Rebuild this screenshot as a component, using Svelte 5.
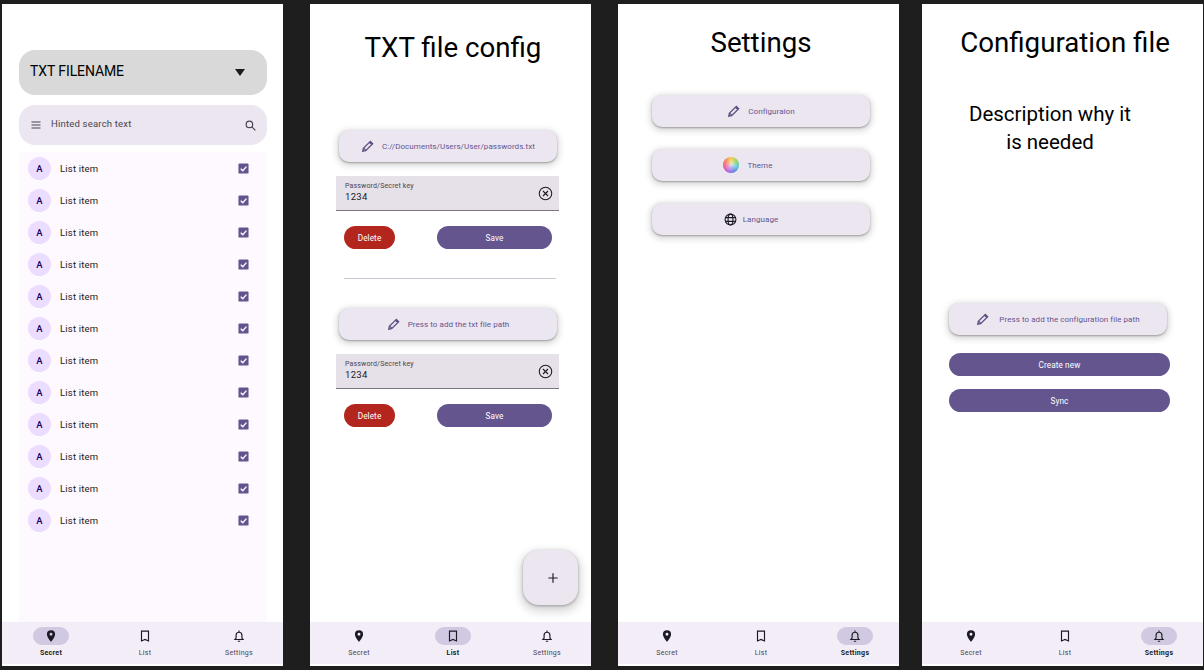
<script>
	const items = Array(12).fill('List item');
	const navItems = ['Secret', 'List', 'Settings'];
</script>

{#snippet pencil()}
	<svg class="pencil" viewBox="0 0 24 24" width="14" height="14"><path d="M3 21l1-5L16 4l4 4L8 20zM14.5 5.5l4 4M5 16l3 3" fill="none" stroke="#5d4f82" stroke-width="2.200"/></svg>
{/snippet}

{#snippet nav(active)}
	<nav class="nav">
		{#each navItems as label, i}
			<div class="nav-item" class:active={i === active}>
				<div class="nav-icon">
					{#if i === 0}
						<svg viewBox="0 0 24 24" width="14" height="14"><path fill-rule="evenodd" d="M12 2a7 7 0 0 0-7 7c0 5 7 13 7 13s7-8 7-13a7 7 0 0 0-7-7zm0 4.5a2.500 2.500 0 1 1 0 5 2.500 2.500 0 0 1 0-5z" fill="#1d1a24"/></svg>
					{:else if i === 1}
						<svg viewBox="0 0 24 24" width="14" height="14"><path d="M6 3.500h12v17l-6-2.600-6 2.600z" fill="none" stroke="#1d1a24" stroke-width="2"/></svg>
					{:else}
						<svg viewBox="0 0 24 24" width="14" height="14"><path d="M5 18h14l-2-2.500V10.500a5 5 0 0 0-10 0v5zM12 2.500v3M10 21h4" fill="none" stroke="#1d1a24" stroke-width="2"/></svg>
					{/if}
				</div>
				<span>{label}</span>
			</div>
		{/each}
	</nav>
{/snippet}

{#snippet keyBlock(path)}
	<button class="tonal wide">
		{@render pencil()}
		<span>{path}</span>
	</button>
	<div class="field">
		<div class="field-text">
			<small>Password/Secret key</small>
			<span>1234</span>
		</div>
		<svg viewBox="0 0 24 24" width="15" height="15"><circle cx="12" cy="12" r="10" fill="none" stroke="#1d1a24" stroke-width="1.700"/><path d="M8 8l8 8M16 8l-8 8" stroke="#1d1a24" stroke-width="1.700"/></svg>
	</div>
	<div class="actions">
		<button class="pill danger">Delete</button>
		<button class="pill save">Save</button>
	</div>
{/snippet}

<div class="board">
	<section class="phone">
		<div class="content first">
			<div class="select">
				<span>TXT FILENAME</span>
				<i class="caret"></i>
			</div>
			<div class="search">
				<svg viewBox="0 0 24 24" width="12" height="12"><path d="M3 6h18M3 12h18M3 18h18" stroke="#49454f" stroke-width="2.200"/></svg>
				<span>Hinted search text</span>
				<svg viewBox="0 0 24 24" width="13" height="13"><circle cx="10" cy="10" r="6" fill="none" stroke="#49454f" stroke-width="2.200"/><path d="M14.500 14.500L21 21" stroke="#49454f" stroke-width="2.200"/></svg>
			</div>
			<ul class="list">
				{#each items as item}
					<li>
						<div class="avatar">A</div>
						<span>{item}</span>
						<svg viewBox="0 0 12 12" width="11" height="11"><rect width="11" height="11" x="0.500" y="0.500" rx="1" fill="#65558f"/><path d="M3 6.200l2.200 2.200L9.200 4" fill="none" stroke="#fff" stroke-width="1.400"/></svg>
					</li>
				{/each}
			</ul>
		</div>
		{@render nav(0)}
	</section>

	<section class="phone">
		<div class="content config">
			<h1 class="txt-title">TXT file config</h1>
			{@render keyBlock('C://Documents/Users/User/passwords.txt')}
			<hr />
			{@render keyBlock('Press to add the txt file path')}
			<button class="fab">
				<svg viewBox="0 0 24 24" width="14" height="14"><path d="M12 4v16M4 12h16" stroke="#1d1a24" stroke-width="2"/></svg>
			</button>
		</div>
		{@render nav(1)}
	</section>

	<section class="phone">
		<div class="content settings">
			<h1>Settings</h1>
			<button class="tonal menu">
				{@render pencil()}
				<span>Configuraion</span>
			</button>
			<button class="tonal menu theme">
				<span class="wheel"></span>
				<span>Theme</span>
			</button>
			<button class="tonal menu language">
				<svg viewBox="0 0 24 24" width="13" height="13"><g fill="none" stroke="#1d1a24" stroke-width="2"><circle cx="12" cy="12" r="10"/><ellipse cx="12" cy="12" rx="4.500" ry="10"/><path d="M2.500 8.500h19M2.500 15.500h19"/></g></svg>
				<span>Language</span>
			</button>
		</div>
		{@render nav(2)}
	</section>

	<section class="phone last">
		<div class="content file">
			<h1>Configuration file</h1>
			<p>Description why it<br />is needed</p>
			<button class="tonal file-btn">
				{@render pencil()}
				<span>Press to add the configuration file path</span>
			</button>
			<button class="pill wide-pill">Create new</button>
			<button class="pill wide-pill">Sync</button>
		</div>
		{@render nav(2)}
	</section>
</div>

<style>
	:global(body) {
		margin: 0;
		background: #1e1e1e;
		overflow: hidden;
	}

	.board {
		display: flex;
		gap: 27px;
		width: 1204px;
		height: 670px;
		padding: 4px 0 4px 2px;
		box-sizing: border-box;
		overflow: hidden;
		font-family: Roboto, sans-serif;
	}

	.phone {
		flex: 0 0 281px;
		height: 662px;
		background: #fff;
		display: flex;
		flex-direction: column;
	}

	.phone.last {
		margin-left: -4px;
	}

	.content {
		flex: 1;
		min-height: 0;
		position: relative;
		display: flex;
		flex-direction: column;
	}

	button {
		font-family: inherit;
		border: 0;
		padding: 0;
	}

	h1 {
		margin: 0;
		padding-left: 5px;
		font-weight: 400;
		font-size: 27.700px;
		line-height: 34px;
		color: #000;
		text-align: center;
	}

	/* first screen */
	.first {
		padding: 46px 16px 0 17px;
	}

	.select {
		height: 45px;
		padding: 0 22px 0 11px;
		background: #d9d9d9;
		border-radius: 16px;
		display: flex;
		align-items: center;
		justify-content: space-between;
		font-size: 14px;
		letter-spacing: -0.1px;
		line-height: 14px;
		color: #000;
	}

	.select span {
		margin-top: -3px;
	}

	.caret {
		width: 0;
		height: 0;
		border-left: 5.500px solid transparent;
		border-right: 5.500px solid transparent;
		border-top: 7px solid #1d1a24;
	}

	.search {
		height: 40px;
		margin-top: 10px;
		padding: 0 10px 0 11px;
		background: #ece6f0;
		border-radius: 16px;
		display: flex;
		align-items: center;
		gap: 9px;
		font-size: 9.500px;
		letter-spacing: 0.2px;
		color: #49454f;
	}

	.search span {
		flex: 1;
		margin-top: -3px;
	}

	.list {
		list-style: none;
		flex: 1;
		margin: 7px 0 0;
		padding: 0;
		background: #fef9ff;
	}

	.list li {
		height: 32px;
		padding: 0 18px 0 9px;
		display: flex;
		align-items: center;
		gap: 9px;
		font-size: 9.500px;
		letter-spacing: 0.2px;
		color: #1d1b20;
	}

	.list li span {
		flex: 1;
	}

	.avatar {
		width: 23px;
		height: 23px;
		border-radius: 50%;
		background: #eaddff;
		color: #21005d;
		font-weight: 500;
		display: flex;
		align-items: center;
		justify-content: center;
	}

	/* buttons */
	.tonal {
		background: #ece6f0;
		border-radius: 10px;
		box-shadow: 0 1px 2px rgba(0, 0, 0, 0.3), 0 2px 6px 2px rgba(0, 0, 0, 0.15);
		display: flex;
		align-items: center;
		justify-content: center;
		gap: 7px;
		height: 32px;
		width: 218px;
		font-size: 8px;
		font-weight: 400;
		letter-spacing: 0.06px;
		color: #65558f;
	}

	.wide {
		margin-left: 29px;
	}

	.pill {
		height: 23px;
		border-radius: 12px;
		background: #65558f;
		color: #fff;
		font-size: 8.200px;
		font-weight: 400;
		letter-spacing: 0.1px;
	}

	.danger {
		width: 51px;
		background: #b3261e;
	}

	.save {
		width: 115px;
	}

	/* config screen */
	.config {
		padding-top: 27px;
	}

	.txt-title {
		margin-bottom: 65px;
	}

	.field {
		height: 35px;
		width: 223px;
		margin: 14px 0 0 26px;
		padding: 0 6px 0 9px;
		box-sizing: border-box;
		background: #e6e0e9;
		border-bottom: 1px solid #79747e;
		display: flex;
		align-items: center;
		justify-content: space-between;
		color: #1d1b20;
	}

	.field-text {
		display: flex;
		flex-direction: column;
		margin-top: -3px;
		font-size: 9.500px;
		letter-spacing: 0.3px;
		line-height: 11px;
	}

	.field-text small {
		font-size: 7px;
		line-height: 10px;
		letter-spacing: 0.15px;
		color: #49454f;
	}

	.actions {
		display: flex;
		justify-content: space-between;
		width: 208px;
		margin: 15px 0 0 34px;
	}

	hr {
		width: 212px;
		margin: 29px 0 29px 34px;
		border: 0;
		border-top: 1px solid #cac4d0;
		height: 0;
	}

	.fab {
		position: absolute;
		left: 213px;
		top: 546px;
		width: 55px;
		height: 55px;
		padding-left: 5px;
		border-radius: 16px;
		background: #ece6f0;
		box-shadow: 0 1px 3px rgba(0, 0, 0, 0.3), 0 4px 8px 3px rgba(0, 0, 0, 0.15);
		display: flex;
		align-items: center;
		justify-content: center;
	}

	/* settings screen */
	.settings {
		padding-top: 22px;
		align-items: center;
	}

	.settings h1 {
		margin-bottom: 35px;
	}

	.menu {
		margin-bottom: 22px;
		margin-left: 5px;
	}

	.theme {
		gap: 9px;
		padding-right: 27px;
		box-sizing: border-box;
	}

	.language {
		gap: 6px;
		padding-right: 20px;
		box-sizing: border-box;
	}

	.wheel {
		width: 16px;
		height: 16px;
		border-radius: 50%;
		background: radial-gradient(circle, rgba(255, 255, 255, 0.7), rgba(255, 255, 255, 0) 70%),
			conic-gradient(#f6c84a, #8fd14f, #4fc3d9, #5a7be0, #b05ae0, #e8508a, #f2774a, #f6c84a);
	}

	/* file screen */
	.file {
		padding-top: 22px;
	}

	.file p {
		margin: 40px 0 0 -25px;
		font-size: 20.500px;
		line-height: 28px;
		text-align: center;
		color: #000;
	}

	.file-btn {
		margin: 147px 0 0 27px;
		gap: 9px;
	}

	.wide-pill {
		width: 221px;
		margin: 13px 0 0 27px;
	}

	.file-btn + .wide-pill {
		margin-top: 18px;
	}

	/* bottom nav */
	.nav {
		flex: 0 0 42px;
		margin-bottom: 2px;
		background: #f3edf7;
		display: flex;
		gap: 24px;
		padding: 5px 0 0 14px;
		box-sizing: border-box;
	}

	.nav-item {
		width: 70px;
		display: flex;
		flex-direction: column;
		align-items: center;
		font-size: 7px;
		line-height: 10px;
		font-weight: 400;
		letter-spacing: 0.3px;
		color: #49454f;
	}

	.nav-icon {
		width: 36px;
		height: 18px;
		border-radius: 9px;
		display: flex;
		align-items: center;
		justify-content: center;
		margin-bottom: 3px;
	}

	.nav-item.active {
		font-weight: 700;
		color: #1d1b20;
	}

	.nav-item.active .nav-icon {
		background: #d0c9e1;
	}
</style>
